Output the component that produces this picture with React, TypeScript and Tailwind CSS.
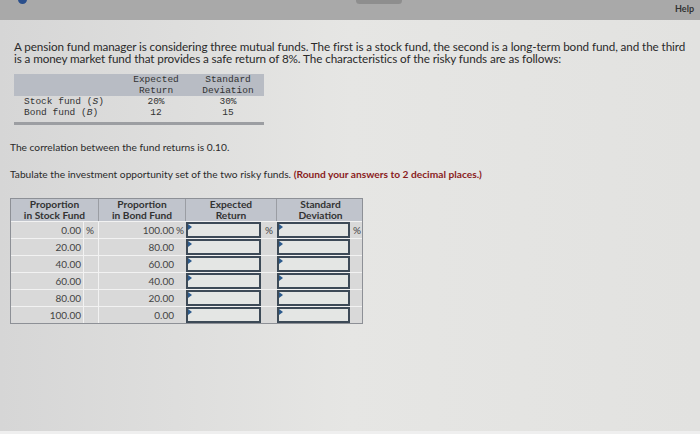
const rows = [
  ["0.00", "100.00"],
  ["20.00", "80.00"],
  ["40.00", "60.00"],
  ["60.00", "40.00"],
  ["80.00", "20.00"],
  ["100.00", "0.00"],
];

const cols = "grid-cols-[73px_15px_77px_10px_75px_16px_73px_14px]";

function InputCell() {
  return (
    <div className="relative h-full border-2 border-[#3d4a57] bg-[#e4e6e4]">
      {/* little marker in the corner */}
      <span className="absolute left-0 top-0 h-0 w-0 border-l-[4px] border-t-[3px] border-b-[3px] border-l-[#2c5a8c] border-t-transparent border-b-transparent" />
    </div>
  );
}

export default function App() {
  return (
    <div
      className="relative h-[434px] w-[700px] overflow-hidden bg-gradient-to-r from-[#d6d6d6] via-[#e6e6e4] to-[#e2e2e0] text-[#2b2b2b]"
      style={{ fontFamily: "Lato, 'Open Sans', sans-serif" }}
    >
      {/* Top bar */}
      <div className="relative flex h-[20px] items-start justify-end bg-[#a9a9a9] pr-[6px]">
        <span className="absolute left-[18px] top-[-5px] h-[9px] w-[9px] rounded-full bg-[#2a4f8c]" />
        <span className="absolute left-[356px] top-[-3px] h-[7px] w-[46px] rounded-full bg-[#8e8e8e]" />
        <span className="pt-[2px] text-[9px] font-bold text-[#333]">Help</span>
      </div>

      <div className="px-[12px] pt-[20px]">
        <p className="pl-[2px] pr-[2px] text-[11.7px] leading-[12px] tracking-[-0.1px] text-[#2a2a2a]">
          A pension fund manager is considering three mutual funds. The first is a stock fund, the second is a long-term bond fund, and the third is a money market fund that provides a safe return of 8%. The characteristics of the risky funds are as follows:
        </p>

        {/* characteristics table */}
        <div
          className="mt-[10px] ml-[2px] w-[250px] border-b-[3px] border-[#9c9ea2] text-[9.5px] leading-[11px] text-[#333]"
          style={{ fontFamily: "'Liberation Mono', monospace" }}
        >
          <div className="grid h-[22px] grid-cols-[106px_72px_72px] bg-[#b8bcc4]">
            <div />
            <div className="text-center">Expected<br />Return</div>
            <div className="text-center">Standard<br />Deviation</div>
          </div>
          <div className="grid grid-cols-[106px_72px_72px] pb-[4px]">
            <div className="pl-[10px]">Stock fund (<i>S</i>)</div>
            <div className="text-center">20%</div>
            <div className="text-center">30%</div>
            <div className="pl-[10px]">Bond fund (<i>B</i>)</div>
            <div className="text-center">12</div>
            <div className="text-center">15</div>
          </div>
        </div>

        <p className="mt-[15px] -ml-[2px] text-[10.2px] text-[#2a2a2a]">The correlation between the fund returns is 0.10.</p>
        <p className="mt-[12px] -ml-[2px] text-[10.2px] text-[#2a2a2a]">
          Tabulate the investment opportunity set of the two risky funds.{" "}
          <span className="font-bold text-[#8a1c1c]">(Round your answers to 2 decimal places.)</span>
        </p>

        {/* investment opportunity table */}
        <div className="mt-[15px] -ml-[2px] w-[353px] border border-[#8d9096] text-[10px] leading-[10px]">
          <div className={`grid h-[22px] ${cols} bg-[#c0c4cc] text-[10.2px] font-bold leading-[11px] text-[#333]`}>
            <div className="col-span-2 border-r border-[#9a9da3] text-center">Proportion<br />in Stock Fund</div>
            <div className="col-span-2 border-r border-[#9a9da3] text-center">Proportion<br />in Bond Fund</div>
            <div className="col-span-2 border-r border-[#9a9da3] text-center">Expected<br />Return</div>
            <div className="col-span-2 text-center">Standard<br />Deviation</div>
          </div>
          {rows.map(([s, b], i) => (
            <div
              key={i}
              className={`grid h-[17px] ${cols} border-t border-[#f2f2f2] bg-[#d9d9d9] text-[#444]`}
            >
              <div className="border-r border-[#f2f2f2] pr-[2px] pt-[3px] text-right">{s}</div>
              <div className="border-r border-[#f2f2f2] pl-[2px] pt-[3px]">{i === 0 ? "%" : ""}</div>
              <div className="pr-[2px] pt-[3px] text-right">{b}</div>
              <div className="pt-[3px]">{i === 0 ? "%" : ""}</div>
              <InputCell />
              <div className="pl-[4px] pt-[3px]">{i === 0 ? "%" : ""}</div>
              <InputCell />
              <div className="pl-[3px] pt-[3px]">{i === 0 ? "%" : ""}</div>
            </div>
          ))}
        </div>
      </div>

      <div className="absolute bottom-0 left-0 h-[3px] w-full bg-[#efefef]" />
    </div>
  );
}
